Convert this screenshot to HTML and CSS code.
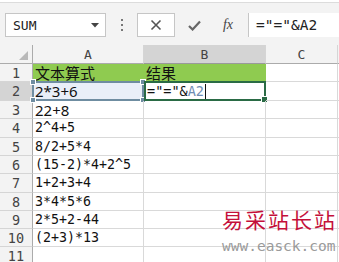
FILE: index.html
```html
<!DOCTYPE html>
<html>
<head>
<meta charset="utf-8">
<link rel="stylesheet" href="styles.css">
</head>
<body>
<div class="app">
  <div class="toolbar">
    <div class="namebox">
      <span class="name">SUM</span>
      <svg class="arrow" width="8" height="5" viewBox="0 0 8 5"><path d="M0 0H8L4 4.5Z" fill="#444"/></svg>
    </div>
    <div class="dots"><i></i><i></i><i></i></div>
    <div class="btn btn-x">
      <svg width="12" height="12" viewBox="0 0 12 12"><path d="M1.5 1.5L10.5 10.5M10.5 1.5L1.5 10.5" stroke="#555" stroke-width="1.6" fill="none"/></svg>
    </div>
    <div class="btn btn-check">
      <svg width="13" height="11" viewBox="0 0 13 11"><path d="M1 6L4.6 9.5L12 1.5" stroke="#666" stroke-width="2.2" fill="none"/></svg>
    </div>
    <div class="btn btn-fx"><span class="fx">fx</span></div>
    <div class="formula">="="&amp;A2</div>
  </div>
  <div class="sheet">
    <div class="corner"><svg width="9" height="9" viewBox="0 0 9 9"><path d="M9 0V9H0Z" fill="#b9b9b9"/></svg></div>
    <div class="ch">A</div>
    <div class="ch ch-sel">B</div>
    <div class="ch">C</div>
    <div class="ch ch-end"></div>

    <div class="rh">1</div>
    <div class="c green zh">文本算式</div>
    <div class="c green zh">结果</div>
    <div class="c"></div>
    <div class="c"></div>

    <div class="rh rh-sel">2</div>
    <div class="c sans ref">2*3+6<span class="ref-box"><i class="h tl"></i><i class="h tr"></i><i class="h bl"></i><i class="h br"></i></span></div>
    <div class="c edit">="="&amp;<span class="refname">A2</span><span class="caret"></span><span class="act-box"><i class="fill"></i></span></div>
    <div class="c"></div>
    <div class="c"></div>

    <div class="rh">3</div>
    <div class="c sans">22+8</div>
    <div class="c"></div><div class="c"></div><div class="c"></div>

    <div class="rh">4</div>
    <div class="c">2^4+5</div>
    <div class="c"></div><div class="c"></div><div class="c"></div>

    <div class="rh">5</div>
    <div class="c">8/2+5*4</div>
    <div class="c"></div><div class="c"></div><div class="c"></div>

    <div class="rh">6</div>
    <div class="c">(15-2)*4+2^5</div>
    <div class="c"></div><div class="c"></div><div class="c"></div>

    <div class="rh">7</div>
    <div class="c">1+2+3+4</div>
    <div class="c"></div><div class="c"></div><div class="c"></div>

    <div class="rh">8</div>
    <div class="c">3*4*5*6</div>
    <div class="c"></div><div class="c"></div><div class="c"></div>

    <div class="rh">9</div>
    <div class="c">2*5+2-44</div>
    <div class="c"></div><div class="c"></div><div class="c"></div>

    <div class="rh">10</div>
    <div class="c">(2+3)*13</div>
    <div class="c"></div><div class="c"></div><div class="c"></div>

    <div class="rh">11</div>
    <div class="c"></div>
    <div class="c"></div><div class="c"></div><div class="c"></div>
  </div>
  <div class="watermark">
    <div class="wm-cn">易采站长站</div>
    <div class="wm-en">www.easck.com</div>
  </div>
</div>
</body>
</html>
```
FILE: styles.css
```css
html, body {
  margin: 0;
  padding: 0;
}
body {
  width: 339px;
  height: 262px;
  overflow: hidden;
  background: #fff;
  font-family: "DejaVu Sans Mono", "Liberation Mono", monospace;
}
.app {
  position: relative;
  width: 339px;
  height: 262px;
  overflow: hidden;
}
.toolbar {
  height: 45px;
  box-sizing: border-box;
  padding-top: 13px;
  background: #f3f3f3;
  border-top: 1px solid #dcdcdc;
  margin-top: 2px;
  height: 43px;
  padding-top: 10px;
  display: flex;
  align-items: flex-start;
}
.namebox {
  margin-left: 5px;
  width: 101px;
  height: 24px;
  box-sizing: border-box;
  border: 1px solid #c6c6c6;
  background: #fff;
  display: flex;
  align-items: center;
  justify-content: space-between;
  padding: 0 6px 0 7px;
}
.name {
  font-family: "DejaVu Sans Mono", monospace;
  font-size: 13px;
  color: #222;
}
.dots {
  width: 31px;
  height: 24px;
  display: flex;
  flex-direction: column;
  align-items: center;
  justify-content: center;
  gap: 3px;
}
.dots i {
  width: 2px;
  height: 2px;
  background: #777;
}
.btn {
  height: 24px;
  box-sizing: border-box;
  display: flex;
  align-items: center;
  justify-content: center;
}
.btn-x {
  width: 38px;
  border: 1px solid #c6c6c6;
  background: #fff;
}
.btn-check { width: 38px; }
.btn-fx { width: 30px; }
.fx {
  font-family: "Liberation Serif", serif;
  font-style: italic;
  font-size: 14px;
  color: #444;
}
.formula {
  margin-left: 5px;
  flex: 1;
  height: 24px;
  box-sizing: border-box;
  border-left: 1px solid #c6c6c6;
  background: #fff;
  padding-left: 7px;
  font-size: 14.5px;
  line-height: 24px;
  color: #222;
}
.sheet {
  display: grid;
  grid-template-columns: 33px 111px 122px 72px 1px;
  grid-template-rows: 19px 18px 19px 18px 19px 18px 18px 19px 18px 18px 18px 18px;
}
.corner, .ch {
  background: #f3f3f3;
  border-bottom: 1px solid #ababab;
  border-right: 1px solid #d5d5d5;
  box-sizing: border-box;
}
.corner {
  display: flex;
  align-items: flex-end;
  justify-content: flex-end;
  padding: 0 4px 3px 0;
  border-right-color: #ababab;
}
.ch {
  text-align: center;
  font-size: 13px;
  line-height: 19px;
  color: #444;
}
.ch-sel {
  background: #d4d4d4;
  border-bottom: 1px solid #9a9a9a;
}
.ch-end { border-right: none; }
.rh {
  background: #f3f3f3;
  border-right: 1px solid #ababab;
  border-bottom: 1px solid #d5d5d5;
  box-sizing: border-box;
  text-align: center;
  font-size: 13.5px;
  line-height: 19px;
  color: #444;
}
.rh-sel { background: #d4d4d4; }
.c {
  position: relative;
  box-sizing: border-box;
  border-right: 1px solid #d9d9d9;
  border-bottom: 1px solid #d9d9d9;
  padding-left: 2px;
  font-size: 13.3px;
  line-height: 18px;
  color: #111;
  white-space: nowrap;
}
.green {
  background: #8fcb50;
  border-right-color: #8fcb50;
}
.zh {
  font-family: "Noto Sans CJK SC", sans-serif;
  font-size: 15px;
  line-height: 18px;
}
.sans {
  font-family: "Noto Sans", sans-serif;
  font-size: 15px;
  line-height: 19px;
}
.ref { background: #e9eff8; }
.ref-box {
  position: absolute;
  left: -1px;
  top: -1px;
  right: -1px;
  bottom: -1px;
  border: 2px solid #6f8da1;
}
.h {
  position: absolute;
  width: 4px;
  height: 4px;
  background: #6f8da1;
  border: 1px solid #fff;
}
.tl { left: -4px; top: -4px; }
.tr { right: -4px; top: -4px; }
.bl { left: -4px; bottom: -4px; }
.br { right: -4px; bottom: -4px; }
.edit {
  padding-left: 3px;
  font-size: 13.5px;
  line-height: 19px;
}
.refname { color: #6f8db3; }
.caret {
  display: inline-block;
  width: 1px;
  height: 15px;
  background: #111;
  vertical-align: -3px;
  margin-left: 1px;
}
.act-box {
  position: absolute;
  left: 0px;
  top: -1px;
  right: -1px;
  bottom: -1px;
  border: 2px solid #2a6b45;
}
.act-box .fill {
  position: absolute;
  right: -4px;
  bottom: -4px;
  width: 5px;
  height: 5px;
  background: #2a6b45;
  border: 1px solid #fff;
}
.watermark {
  position: absolute;
  left: 222px;
  top: 205px;
}
.wm-cn {
  font-family: "Noto Sans CJK SC", serif;
  font-size: 21px;
  letter-spacing: 2px;
  color: #c4103a;
  line-height: 28px;
}
.wm-en {
  font-family: "DejaVu Sans Mono", monospace;
  font-size: 14.5px;
  color: #9a9a9a;
  line-height: 18px;
  margin-top: 4px;
}
```
